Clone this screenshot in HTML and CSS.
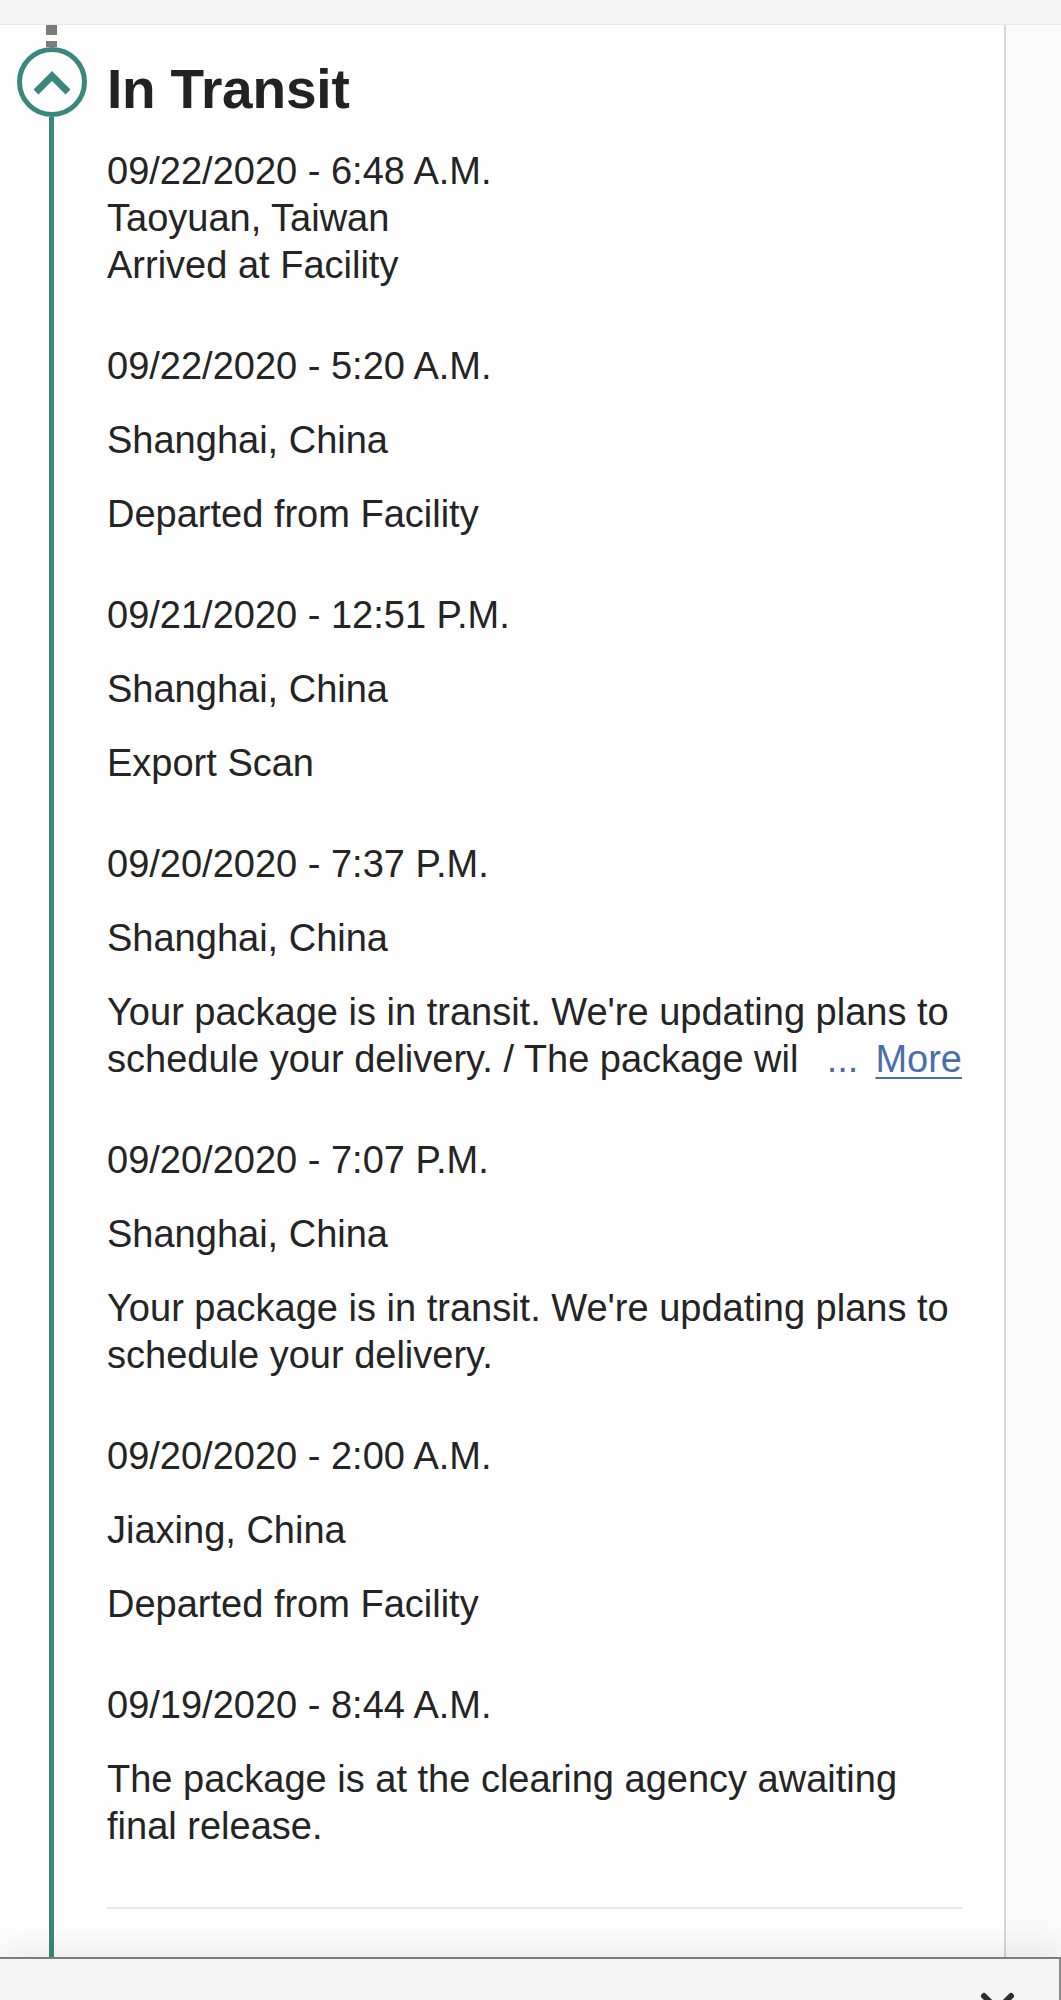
FILE: index.html
```html
<!DOCTYPE html>
<html lang="en">
<head>
<meta charset="utf-8">
<title>In Transit</title>
<link rel="stylesheet" href="styles.css">
</head>
<body>
<div class="topbar"></div>
<div class="page">
  <main class="panel">
    <div class="rail">
      <span class="dash dash-a"></span>
      <span class="dash dash-b"></span>
      <span class="marker">
        <svg class="chev" viewBox="0 0 60 60" width="60" height="60"><polyline points="14,40 30,24 46,40" fill="none" stroke="#3a877d" stroke-width="7" stroke-linejoin="miter"/></svg>
      </span>
      <span class="rail-line"></span>
    </div>
    <section class="content">
      <h1 class="title">In Transit</h1>
      <ol class="events">
        <li class="event"><p>09/22/2020 - 6:48 A.M.<br>Taoyuan, Taiwan<br>Arrived at Facility</p></li>
        <li class="event"><p>09/22/2020 - 5:20 A.M.</p><p>Shanghai, China</p><p>Departed from Facility</p></li>
        <li class="event"><p>09/21/2020 - 12:51 P.M.</p><p>Shanghai, China</p><p>Export Scan</p></li>
        <li class="event"><p>09/20/2020 - 7:37 P.M.</p><p>Shanghai, China</p>
          <p class="truncated">Your package is in transit. We're updating plans to schedule your delivery. / The package will be delivered as soon as possible.<span class="more"><span class="ellipsis">...</span><a href="#" class="more-link">More</a></span></p></li>
        <li class="event"><p>09/20/2020 - 7:07 P.M.</p><p>Shanghai, China</p><p>Your package is in transit. We're updating plans to schedule your delivery.</p></li>
        <li class="event"><p>09/20/2020 - 2:00 A.M.</p><p>Jiaxing, China</p><p>Departed from Facility</p></li>
        <li class="event"><p>09/19/2020 - 8:44 A.M.</p><p>The package is at the clearing agency awaiting final release.</p></li>
      </ol>
      <hr class="divider">
    </section>
  </main>
  <aside class="gutter"></aside>
</div>
<footer class="bottombar">
  <svg class="close" viewBox="0 0 40 40" width="40" height="40"><path d="M6 6 L33 33 M33 6 L6 33" fill="none" stroke="#2e2e2e" stroke-width="6" stroke-linecap="round"/></svg>
</footer>
</body>
</html>
```

FILE: styles.css
```css
html, body {
  margin: 0;
  padding: 0;
}
body {
  background: #fafafa;
  font-family: "Liberation Sans", Arial, Helvetica, sans-serif;
  color: #242424;
  overflow: hidden;
}
.topbar {
  height: 24px;
  background: #f5f5f5;
  border-bottom: 1px solid #e9e9e9;
}
.page {
  display: flex;
  height: 1932px;
}
.panel {
  width: 1004px;
  flex: none;
  display: flex;
  background: #fefefe;
  border-right: 2px solid #d6d6d6;
  overflow: hidden;
}
.rail {
  width: 103px;
  flex: none;
  display: flex;
  flex-direction: column;
  align-items: center;
}
.dash {
  display: block;
  width: 11px;
  background: #7b7b7b;
  flex: none;
}
.dash-a { height: 10px; }
.dash-b { height: 6px; margin-top: 6px; }
.marker {
  width: 70px;
  height: 70px;
  box-sizing: border-box;
  border: 5px solid #3a877d;
  border-radius: 50%;
  display: flex;
  align-items: center;
  justify-content: center;
  flex: none;
}
.chev { display: block; }
.rail-line {
  display: block;
  width: 5px;
  flex: 1;
  background: #3a877d;
}
.content {
  flex: 1;
  padding: 32px 42px 0 4px;
}
.title {
  margin: 0 0 27px;
  font-size: 55px;
  line-height: 64px;
  font-weight: 700;
  letter-spacing: -0.2px;
  color: #222;
}
.events {
  list-style: none;
  margin: 0;
  padding: 0;
}
.event + .event {
  margin-top: 54px;
}
.event p {
  margin: 0;
  font-size: 38px;
  line-height: 47px;
}
.event p + p {
  margin-top: 27px;
}
.event p.truncated {
  position: relative;
  max-height: 94px;
  overflow: hidden;
}
.more {
  position: absolute;
  right: 0;
  bottom: 0;
  padding-left: 27px;
  background: #fefefe;
  color: #4a6ea8;
  line-height: 47px;
}
.ellipsis {
  margin-right: 17px;
}
.more-link {
  color: #4a6ea8;
  text-decoration: underline;
  text-decoration-thickness: 2px;
  text-underline-offset: 5px;
}
.divider {
  border: 0;
  height: 2px;
  background: #e8e8e8;
  margin: 57px 0 0;
}
.gutter {
  flex: 1;
  background: #fafafa;
}
.bottombar {
  position: relative;
  z-index: 2;
  height: 100px;
  box-sizing: border-box;
  background: #f5f5f5;
  border-top: 2px solid #7c7c7c;
  border-right: 2px solid #8a8a8a;
  box-shadow: 0 -12px 26px rgba(0, 0, 0, 0.07);
  display: flex;
  justify-content: flex-end;
  align-items: flex-start;
  padding: 31px 41px 0 0;
}
.close { display: block; }
```
